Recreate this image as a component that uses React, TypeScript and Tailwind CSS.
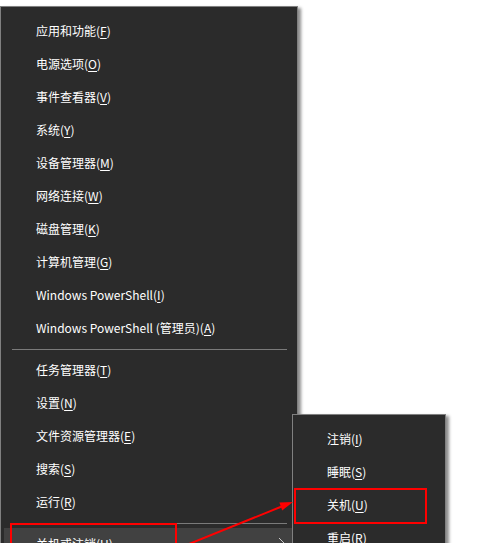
import React from 'react'

type Item = { label: string; key: string }

const groupOne: Item[] = [
  { label: '应用和功能', key: 'F' },
  { label: '电源选项', key: 'O' },
  { label: '事件查看器', key: 'V' },
  { label: '系统', key: 'Y' },
  { label: '设备管理器', key: 'M' },
  { label: '网络连接', key: 'W' },
  { label: '磁盘管理', key: 'K' },
  { label: '计算机管理', key: 'G' },
  { label: 'Windows PowerShell', key: 'I' },
  { label: 'Windows PowerShell (管理员)', key: 'A' }
]

const groupTwo: Item[] = [
  { label: '任务管理器', key: 'T' },
  { label: '设置', key: 'N' },
  { label: '文件资源管理器', key: 'E' },
  { label: '搜索', key: 'S' },
  { label: '运行', key: 'R' }
]

const subItems: Item[] = [
  { label: '注销', key: 'I' },
  { label: '睡眠', key: 'S' },
  { label: '关机', key: 'U' },
  { label: '重启', key: 'R' }
]

function Label({ label, keyChar }: { label: string; keyChar: string }) {
  return (
    <span className="whitespace-nowrap">
      {label}(<span className="underline underline-offset-[2px]">{keyChar}</span>)
    </span>
  )
}

function MenuItem({ item, indent }: { item: Item; indent: string }) {
  return (
    <div className={`flex h-[33px] items-center pb-[2px] ${indent}`}>
      <Label label={item.label} keyChar={item.key} />
    </div>
  )
}

function Separator() {
  return (
    <div className="flex h-[9px] items-center pl-[11px] pr-[10px]">
      <div className="h-px flex-1 bg-[#7a7a7a]" />
    </div>
  )
}

export default function App() {
  return (
    <div
      className="relative h-[543px] w-[496px] overflow-hidden bg-white text-[12px] leading-none text-white"
      style={{ fontFamily: '"Noto Sans CJK SC", "Noto Sans", sans-serif' }}
    >
      {/* main Win+X menu */}
      <div className="mt-[6px] w-[298px] border border-[#808080] bg-[#2b2b2b] pt-[8px] shadow-[3px_2px_3px_rgba(0,0,0,0.45)]">
        {groupOne.map((it) => (
          <MenuItem key={it.label} item={it} indent="pl-[35px]" />
        ))}
        <Separator />
        {groupTwo.map((it) => (
          <MenuItem key={it.label} item={it} indent="pl-[35px]" />
        ))}
        <Separator />
        <div className="mx-[3px] flex h-[33px] items-center justify-between bg-[#414141] pb-[2px] pl-[32px] pr-[8px]">
          <Label label="关机或注销" keyChar="U" />
          <svg width="8" height="14" viewBox="0 0 8 14" className="shrink-0">
            <polyline points="1,1 7,7 1,13" fill="none" stroke="#c8c8c8" strokeWidth="1" />
          </svg>
        </div>
      </div>

      {/* shut down submenu */}
      <div className="absolute left-[292px] top-[414px] w-[154px] border border-[#808080] bg-[#2b2b2b] pt-[8px] pb-[8px] shadow-[3px_2px_3px_rgba(0,0,0,0.45)]">
        {subItems.map((it) => (
          <MenuItem key={it.label} item={it} indent="pl-[34px]" />
        ))}
      </div>

      {/* annotations */}
      <div className="absolute left-[10px] top-[523px] h-[40px] w-[167px] border-2 border-[#ff0000]" />
      <div className="absolute left-[294px] top-[488px] h-[36px] w-[133px] border-2 border-[#ff0000]" />
      <svg className="absolute left-0 top-0" width="496" height="543" viewBox="0 0 496 543">
        <line x1="184" y1="546" x2="283" y2="506" stroke="#ff0000" strokeWidth="2" />
        <polygon points="293,502 282.2,510.4 279.4,502.6" fill="#ff0000" />
      </svg>
    </div>
  )
}
